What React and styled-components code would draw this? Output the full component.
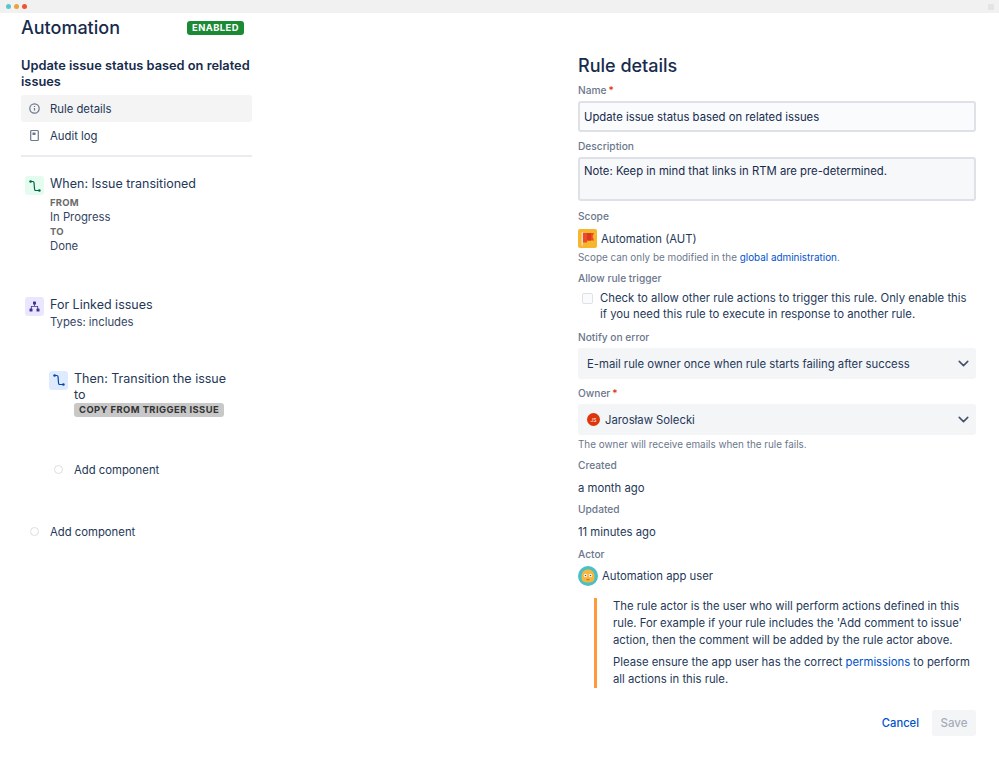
import React from "react";
import styled, { createGlobalStyle } from "styled-components";
import { ChevronDown } from "lucide-react";

const Global = createGlobalStyle`
  html, body { margin: 0; padding: 0; background: #fff; }
  body { font-family: Inter, "Noto Sans", sans-serif; color: #172b4d; -webkit-font-smoothing: antialiased; }
`;
const Page = styled.div`width: 999px; height: 759px; overflow: hidden; display: flex; flex-direction: column;`;
const TitleBar = styled.div`
  height: 13px; flex: none; background: #f1f1f1; display: flex; align-items: center; gap: 3px; padding: 0 5px 0 6px;
`;
const Dot = styled.span`width: 5px; height: 5px; border-radius: 50%; background: ${p => p.$c};`;
const WinBtn = styled.span`width: 6px; height: 6px; margin-left: auto; background: #e4e4e4;`;
const Body = styled.div`flex: 1; display: flex; padding-left: 21px;`;
const Left = styled.div`width: 231px; flex: none; display: flex; flex-direction: column;`;
const Right = styled.div`width: 398px; flex: none; margin-left: 326px; display: flex; flex-direction: column; padding-top: 41px;`;
const Header = styled.div`display: flex; align-items: center; height: 30px; margin-bottom: 15px;`;
const AppTitle = styled.h1`margin: 0; font-size: 18px; line-height: 30px; font-weight: 500; color: #172b4d;`;
const Lozenge = styled.span`
  margin-left: auto; margin-right: 8px; background: #1b8a35; color: #fff; font-size: 9.4px; font-weight: 700; letter-spacing: 0.45px;
  line-height: 14px; padding: 0 5px; border-radius: 3px;
`;
const RuleName = styled.h2`margin: 0 0 5px; font-size: 12.8px; line-height: 16px; font-weight: 600; color: #172b4d;`;
const NavItem = styled.div`
  height: 27px; display: flex; align-items: center; gap: 9px; padding-left: 7px; border-radius: 3px; font-size: 11.3px;
  background: ${p => (p.$active ? "#f4f4f4" : "transparent")}; color: #253858;
`;
const Nav = styled.div`display: flex; flex-direction: column; margin-bottom: 6px;`;
const Rule = styled.hr`border: 0; height: 2px; background: #ebecf0; margin: 0;`;
const Node = styled.div`display: flex; gap: 6px; margin-left: ${p => p.$indent || 4}px; margin-top: ${p => p.$top}px;`;
const IconTile = styled.div`
  width: 19px; height: 19px; flex: none; border-radius: 3px; background: ${p => p.$bg}; color: ${p => p.$fg};
  display: flex; align-items: center; justify-content: center;
`;
const NodeBody = styled.div`display: flex; flex-direction: column; flex: 1; min-width: 0; padding-right: ${p => p.$pr || 0}px;`;
const NodeTitle = styled.div`font-size: 12.5px; line-height: 16px; color: #253858;`;
const NodeText = styled.div`font-size: 11.3px; line-height: 14.5px; color: #344563; margin-top: ${p => p.$top || 0}px;`;
const NodeLabel = styled.div`font-size: 9.5px; font-weight: 700; line-height: 14px; letter-spacing: 0.2px; color: #6b6b6b; margin-top: ${p => p.$top || 0}px;`;
const Copy = styled.span`
  align-self: flex-start; background: #c8c8c8; color: #333; font-size: 9.4px; font-weight: 700; letter-spacing: 0.45px;
  line-height: 14px; padding: 0 5px; border-radius: 3px;
`;
const AddRow = styled.div`display: flex; align-items: center; gap: 11px; font-size: 11.3px; color: #253858; margin-left: ${p => p.$indent}px; margin-top: ${p => p.$top}px; line-height: 16px;`;
const Circle = styled.span`box-sizing: border-box; width: 9px; height: 9px; border: 1.5px solid #dcdee2; border-radius: 50%; flex: none;`;
const PanelTitle = styled.h2`margin: 0 0 6px; font-size: 18px; line-height: 24px; font-weight: 500; color: #172b4d;`;
const Label = styled.div`font-size: 10.2px; font-weight: 500; line-height: 13px; color: #6b778c; margin-top: ${p => p.$top || 0}px;`;
const Req = styled.span`color: #de350b; margin-left: 2px;`;
const Field = styled.div`
  box-sizing: border-box; border: 2px solid #dfe1e6; border-radius: 3px; background: ${p => (p.$tall ? "#f7f8f9" : "#fafbfc")};
  font-size: 11.3px; color: #172b4d; padding: ${p => (p.$tall ? "4px 4px" : "0 4px")}; height: ${p => p.$h}px;
  display: flex; align-items: ${p => (p.$tall ? "flex-start" : "center")}; margin-top: 4px; line-height: 16px;
`;
const ScopeRow = styled.div`display: flex; align-items: center; gap: 4px; margin-top: 6px; font-size: 11.3px; height: 19px; color: #253858;`;
const Help = styled.div`font-size: 9.9px; line-height: 13px; color: #6b778c; margin-top: ${p => p.$top || 3}px;`;
const A = styled.a`color: #0052cc; text-decoration: none;`;
const CheckRow = styled.div`display: flex; gap: 7px; margin-top: 5px; padding-left: 4px; font-size: 11.35px; line-height: 16px; color: #253858;`;
const Box = styled.span`box-sizing: border-box; width: 11px; height: 11px; flex: none; margin-top: 3px; border: 1.5px solid #dfe1e6; border-radius: 2px; background: #fafbfc;`;
const Select = styled.div`
  height: 31px; margin-top: 4px; background: #f4f5f7; border-radius: 3px; display: flex; align-items: center; padding: 0 4px 0 9px;
  font-size: 11.3px; color: #253858; gap: 5px;
`;
const SelectValue = styled.span`flex: 1;`;
const Avatar = styled.span`
  width: 13px; height: 13px; border-radius: 50%; background: #de350b; color: #fff; font-size: 5px; display: flex; align-items: center; justify-content: center;
`;
const Value = styled.div`font-size: 11.3px; line-height: 16px; margin-top: 8px; color: #253858;`;
const ActorRow = styled.div`display: flex; align-items: center; gap: 4px; margin-top: 5px; font-size: 11.3px; line-height: 20px; color: #253858;`;
const Note = styled.div`
  margin: 12px 0 0 16px; border-left: 3px solid #ff9a3d; padding: 0 4px 0 16px; font-size: 11.3px; line-height: 17px; color: #253858;
  display: flex; flex-direction: column; gap: 4.5px;
`;
const Paragraph = styled.p`margin: 0;`;
const Actions = styled.div`display: flex; justify-content: flex-end; align-items: center; gap: 13px; margin-top: 22px;`;
const Cancel = styled.span`font-size: 11.2px; font-weight: 500; color: #0052cc;`;
const Save = styled.span`
  width: 44px; height: 26px; display: flex; align-items: center; justify-content: center; background: #f4f5f7; color: #a5adba;
  font-size: 11.5px; font-weight: 500; border-radius: 3px;
`;

const Transition = () => (
  <svg width="12" height="12" viewBox="0 0 12 12" fill="none" stroke="currentColor" strokeWidth="1.2">
    <path d="M1.500 1.500h2.400q1 0 1.100 1l.6 7q.1 1 1.100 1h3.300" />
    <circle cx="1.600" cy="1.500" r="1.300" fill="currentColor" stroke="none" />
    <circle cx="10.400" cy="10.500" r="1.300" fill="currentColor" stroke="none" />
  </svg>
);
const Branch = () => (
  <svg width="11" height="11" viewBox="0 0 11 11" fill="currentColor">
    <rect x="4" y="0.500" width="3" height="3" rx="0.600" />
    <rect x="0.500" y="7.500" width="3" height="3" rx="0.600" />
    <rect x="7.500" y="7.500" width="3" height="3" rx="0.600" />
    <path d="M5.100 3h.8v2h3.200v3h-.8V5.800H2.700V8h-.8V5h3.200z" />
  </svg>
);
const Info = () => (
  <svg width="13" height="13" viewBox="0 0 13 13" fill="none" stroke="#6b778c" strokeWidth="1.200">
    <circle cx="6.500" cy="6.500" r="4.700" />
    <path d="M6.500 6v2.600M6.500 3.900v1" />
  </svg>
);
const Doc = () => (
  <svg width="13" height="13" viewBox="0 0 13 13" fill="none" stroke="#6b778c" strokeWidth="1.200">
    <rect x="2.700" y="1.500" width="7.600" height="10" rx="1" />
    <path d="M4.500 3.500h3v2.500h-3z" fill="#6b778c" stroke="none" />
  </svg>
);
const Flag = () => (
  <svg width="19" height="19" viewBox="0 0 19 19">
    <rect width="19" height="19" rx="2" fill="#f8b52e" />
    <rect x="3.500" y="3" width="1.500" height="13.500" fill="#e6dcc8" />
    <path d="M5 4h11l-1.500 3.500 1.500 4H9v2H5z" fill="#ee4a25" />
    <path d="M9 4h4v7.500H9z" fill="#d63b1f" />
  </svg>
);
const Robot = () => (
  <svg width="20" height="20" viewBox="0 0 20 20">
    <circle cx="10" cy="10" r="10" fill="#4bbfc6" />
    <path d="M3.500 11c0-5 2.500-7.500 6.500-7.500s6.500 2.500 6.500 7.500-3 5.500-6.500 5.500-6.500-.5-6.500-5.500z" fill="#f6b73c" />
    <circle cx="7.500" cy="9.500" r="1.700" fill="#fff" />
    <circle cx="12.500" cy="9.500" r="1.700" fill="#fff" />
    <circle cx="7.500" cy="9.500" r=".8" fill="#42526e" />
    <circle cx="12.500" cy="9.500" r=".8" fill="#42526e" />
    <rect x="8.500" y="13" width="3" height="1.200" fill="#c9742b" />
  </svg>
);

export default function App() {
  return (
    <Page>
      <Global />
      <TitleBar>
        <Dot $c="#5bc5c9" /><Dot $c="#e8a33a" /><Dot $c="#f0532d" />
        <WinBtn />
      </TitleBar>
      <Body>
        <Left>
          <Header>
            <AppTitle>Automation</AppTitle>
            <Lozenge>ENABLED</Lozenge>
          </Header>
          <RuleName>Update issue status based on related issues</RuleName>
          <Nav>
            <NavItem $active><Info />Rule details</NavItem>
            <NavItem><Doc />Audit log</NavItem>
          </Nav>
          <Rule />
          <Node $top={19}>
            <IconTile $bg="#e3fcef" $fg="#006644"><Transition /></IconTile>
            <NodeBody>
              <NodeTitle>When: Issue transitioned</NodeTitle>
              <NodeLabel $top={4}>FROM</NodeLabel>
              <NodeText>In Progress</NodeText>
              <NodeLabel>TO</NodeLabel>
              <NodeText>Done</NodeText>
            </NodeBody>
          </Node>
          <Node $top={44}>
            <IconTile $bg="#eae6ff" $fg="#403294"><Branch /></IconTile>
            <NodeBody>
              <NodeTitle>For Linked issues</NodeTitle>
              <NodeText $top={2}>Types: includes</NodeText>
            </NodeBody>
          </Node>
          <Node $indent={28} $top={41}>
            <IconTile $bg="#deebff" $fg="#0747a6"><Transition /></IconTile>
            <NodeBody $pr={25}>
              <NodeTitle>Then: Transition the issue to</NodeTitle>
              <Copy>COPY FROM TRIGGER ISSUE</Copy>
            </NodeBody>
          </Node>
          <AddRow $indent={33} $top={45}><Circle />Add component</AddRow>
          <AddRow $indent={9} $top={46}><Circle />Add component</AddRow>
        </Left>
        <Right>
          <PanelTitle>Rule details</PanelTitle>
          <Label>Name<Req>*</Req></Label>
          <Field $h={31}>Update issue status based on related issues</Field>
          <Label $top={8}>Description</Label>
          <Field $h={44} $tall>Note: Keep in mind that links in RTM are pre-determined.</Field>
          <Label $top={9}>Scope</Label>
          <ScopeRow><Flag />Automation (AUT)</ScopeRow>
          <Help>Scope can only be modified in the <A>global administration</A>.</Help>
          <Label $top={8}>Allow rule trigger</Label>
          <CheckRow>
            <Box />
            <span>Check to allow other rule actions to trigger this rule. Only enable this if you need this rule to execute in response to another rule.</span>
          </CheckRow>
          <Label $top={9}>Notify on error</Label>
          <Select>
            <SelectValue>E-mail rule owner once when rule starts failing after success</SelectValue>
            <ChevronDown size={17} strokeWidth={2.2} color="#42526e" />
          </Select>
          <Label $top={8}>Owner<Req>*</Req></Label>
          <Select>
            <Avatar>JS</Avatar>
            <SelectValue>Jarosław Solecki</SelectValue>
            <ChevronDown size={17} strokeWidth={2.2} color="#42526e" />
          </Select>
          <Help $top={3}>The owner will receive emails when the rule fails.</Help>
          <Label $top={8}>Created</Label>
          <Value>a month ago</Value>
          <Label $top={7}>Updated</Label>
          <Value>11 minutes ago</Value>
          <Label $top={8}>Actor</Label>
          <ActorRow><Robot />Automation app user</ActorRow>
          <Note>
            <Paragraph>The rule actor is the user who will perform actions defined in this rule. For example if your rule includes the 'Add comment to issue' action, then the comment will be added by the rule actor above.</Paragraph>
            <Paragraph>Please ensure the app user has the correct <A>permissions</A> to perform all actions in this rule.</Paragraph>
          </Note>
          <Actions>
            <Cancel>Cancel</Cancel>
            <Save>Save</Save>
          </Actions>
        </Right>
      </Body>
    </Page>
  );
}
